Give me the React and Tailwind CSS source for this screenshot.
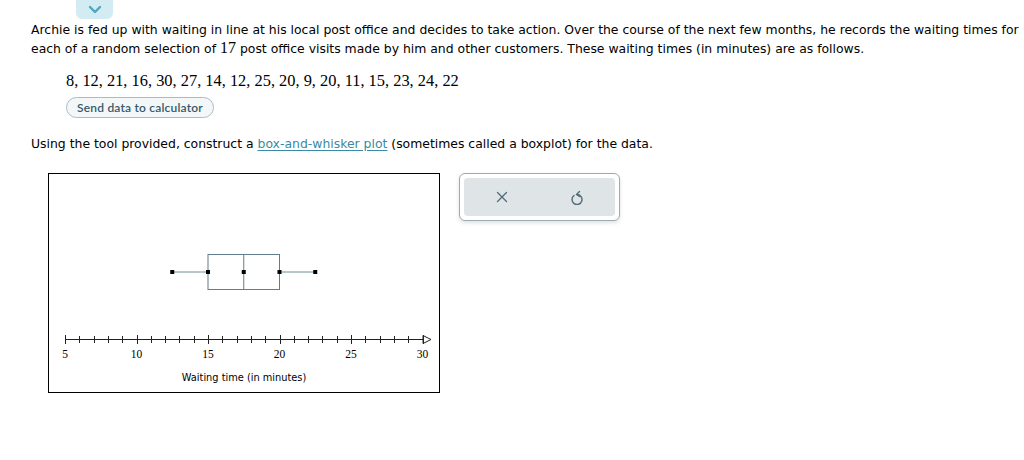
import React from "react";

const data = [8, 12, 21, 16, 30, 27, 14, 12, 25, 20, 9, 20, 11, 15, 23, 24, 22];

// axis scale: 5 -> 16px, 1 unit = 14.3px (inside the plot frame)
const sx = (v) => 16 + (v - 5) * 14.3;

function BoxPlot() {
  const ticks = [];
  for (let v = 5; v <= 30; v++) ticks.push(v);
  const q = { min: 12.5, q1: 15, med: 17.5, q3: 20, max: 22.5 };
  const yMid = 98;

  return (
    <svg width="390" height="218" viewBox="0 0 390 218" className="block">
      {/* box */}
      <line x1={sx(q.min)} y1={yMid} x2={sx(q.q1)} y2={yMid} stroke="#6f8c98" strokeWidth="1" />
      <line x1={sx(q.q3)} y1={yMid} x2={sx(q.max)} y2={yMid} stroke="#6f8c98" strokeWidth="1" />
      <rect x={sx(q.q1)} y="80.5" width={sx(q.q3) - sx(q.q1)} height="35" fill="none" stroke="#5f7d8a" strokeWidth="1" />
      <line x1={sx(q.med)} y1="80.5" x2={sx(q.med)} y2="115.5" stroke="#5f7d8a" strokeWidth="1" />
      {[q.min, q.q1, q.med, q.q3, q.max].map((v) => (
        <rect key={v} x={sx(v) - 2} y={yMid - 2} width="4" height="4" fill="#000" />
      ))}

      {/* axis */}
      <line x1={sx(5)} y1="165.5" x2="375" y2="165.5" stroke="#222" strokeWidth="1" />
      <path d="M374 161.5 L382 165.5 L374 169.5 Z" fill="#fff" stroke="#222" strokeWidth="1" />
      {ticks.map((v) => (
        <line
          key={v}
          x1={Math.round(sx(v)) + 0.5}
          y1={v % 5 === 0 ? 161 : 162}
          x2={Math.round(sx(v)) + 0.5}
          y2={v % 5 === 0 ? 170 : 169}
          stroke="#222"
          strokeWidth="1"
        />
      ))}
      {[5, 10, 15, 20, 25, 30].map((v) => (
        <text
          key={v}
          x={sx(v)}
          y="184"
          textAnchor="middle"
          fontFamily="'Liberation Serif', serif"
          fontSize="11.5"
          fill="#000"
        >
          {v}
        </text>
      ))}
      <text
        x="195"
        y="207"
        textAnchor="middle"
        fontFamily="'DejaVu Sans', sans-serif"
        fontSize="9.8"
        fill="#000"
      >
        Waiting time (in minutes)
      </text>
    </svg>
  );
}

function App() {
  return (
    <div className="w-[1024px] h-[460px] bg-white overflow-hidden text-black font-['DejaVu_Sans',sans-serif]">
      {/* collapse tab */}
      <div className="ml-[76px] w-[37px] h-[19px] bg-[#d3ebf3] rounded-b-md flex items-center justify-center">
        <svg width="14" height="9" viewBox="0 0 14 9">
          <path d="M2 2 L7 7 L12 2" fill="none" stroke="#4aa6c4" strokeWidth="2.4" strokeLinecap="round" strokeLinejoin="round" />
        </svg>
      </div>

      <div className="px-[31px] pt-[2px]">
        <p className="text-[12.42px] leading-[18px] whitespace-nowrap">
          Archie is fed up with waiting in line at his local post office and decides to take action. Over the course of the next few months, he records the waiting times for
          <br />
          each of a random selection of <span className="font-['Liberation_Serif',serif] text-[16px]">17</span> post office visits made by him and other customers. These waiting times (in minutes) are as follows.
        </p>

        <div className="ml-[35px] mt-[13px]">
          <p className="font-['Liberation_Serif',serif] text-[16.4px] leading-[20px] whitespace-nowrap">
            {data.join(", ")}
          </p>
          <button className="mt-[6px] h-[21px] px-[10px] rounded-full border border-[#a9bcc4] bg-[#f4f7f8] text-[#35596a] text-[12px] font-semibold font-['Lato',sans-serif] leading-none tracking-[0.2px]">
            Send data to calculator
          </button>
        </div>

        <p className="mt-[16px] text-[12.42px] leading-[18px]">
          Using the tool provided, construct a{" "}
          <a href="#" className="text-[#3a8aa3] underline underline-offset-2">
            box-and-whisker plot
          </a>{" "}
          (sometimes called a boxplot) for the data.
        </p>

        <div className="mt-[20px] ml-[17px] flex items-start gap-[19px]">
          <div className="w-[392px] h-[220px] border border-black bg-white">
            <BoxPlot />
          </div>

          <div className="w-[161px] h-[48px] rounded-md border border-[#9aabb3] bg-white p-[4px] shadow-[0_2px_4px_rgba(0,0,0,0.12)]">
            <div className="flex h-full rounded bg-[#dfe4e7]">
              <button className="flex-1 flex items-center justify-center">
                <svg width="12" height="12" viewBox="0 0 12 12">
                  <path d="M1.5 1.5 L10.5 10.5 M10.5 1.5 L1.5 10.5" stroke="#4f6c79" strokeWidth="1.3" strokeLinecap="round" />
                </svg>
              </button>
              <button className="flex-1 flex items-center justify-center">
                <svg width="14" height="16" viewBox="0 0 14 16">
                  <path d="M4 6.5 A5 5 0 1 0 7 5.5" fill="none" stroke="#4f6c79" strokeWidth="1.4" strokeLinecap="round" />
                  <path d="M9.5 2.5 L6.5 5.5 L9.5 7.5" fill="none" stroke="#4f6c79" strokeWidth="1.4" strokeLinecap="round" strokeLinejoin="round" />
                </svg>
              </button>
            </div>
          </div>
        </div>
      </div>
    </div>
  );
}

export default App;
